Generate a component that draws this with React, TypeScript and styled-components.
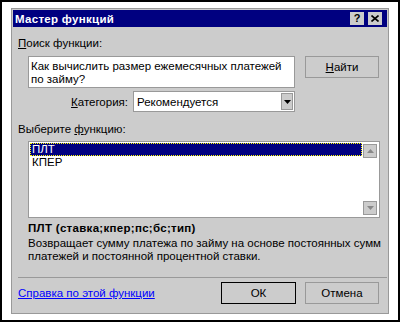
import React from "react";
import styled, { createGlobalStyle } from "styled-components";

const GlobalStyle = createGlobalStyle`
  html, body {
    margin: 0;
    padding: 0;
    background: #fff;
  }
  body {
    font-family: "Liberation Sans", Arial, sans-serif;
  }
`;

const Frame = styled.div`
  width: 400px;
  height: 322px;
  box-sizing: border-box;
  border: 2px solid #000;
  padding: 6px 0 0 9px;
  background: #fff;
`;

const Dialog = styled.div`
  width: 378px;
  height: 306px;
  box-sizing: border-box;
  border: 1px solid #999;
  padding: 1px;
  background: #ccc;
  display: flex;
  flex-direction: column;
  font-size: 11.5px;
  color: #000;
`;

const TitleBar = styled.div`
  height: 17px;
  flex: none;
  background: #000080;
  display: flex;
  align-items: center;
  justify-content: space-between;
  padding: 0 5px 0 2px;
`;

const Title = styled.span`
  color: #fff;
  font-weight: bold;
  font-size: 11.5px;
  letter-spacing: 0.3px;
`;

const TitleButtons = styled.div`
  display: flex;
  gap: 4px;
`;

const TitleButton = styled.div`
  width: 14px;
  height: 13px;
  background: #ccc;
  display: flex;
  align-items: center;
  justify-content: center;
  font-weight: bold;
  font-size: 11px;
  line-height: 13px;
`;

const Body = styled.div`
  padding: 9px 8px 0 5px;
  display: flex;
  flex-direction: column;
`;

const SectionLabel = styled.div<{ $top?: number }>`
  line-height: 14px;
  margin-top: ${(p) => p.$top ?? 0}px;
`;

const SearchRow = styled.div`
  display: flex;
  gap: 10px;
  margin: 6px 0 0 10px;
`;

const QueryBox = styled.div`
  width: 267px;
  height: 32px;
  box-sizing: border-box;
  border: 1px solid #999;
  background: #fff;
  padding: 3px 2px;
  line-height: 13px;
`;

const Button = styled.div<{ $width: number; $default?: boolean }>`
  width: ${(p) => p.$width}px;
  height: 22px;
  box-sizing: border-box;
  border: 1px solid ${(p) => (p.$default ? "#000" : "#999")};
  display: flex;
  align-items: center;
  justify-content: center;
  background: #ccc;
`;

const CategoryRow = styled.div`
  width: 267px;
  display: flex;
  justify-content: flex-end;
  align-items: center;
  gap: 5px;
  margin: 3px 0 0 10px;
`;

const Select = styled.div`
  width: 162px;
  height: 21px;
  box-sizing: border-box;
  border: 1px solid #999;
  background: #fff;
  display: flex;
  align-items: center;
`;

const SelectText = styled.span`
  flex: 1;
  padding-left: 3px;
`;

const DropButton = styled.div`
  width: 12px;
  height: 17px;
  margin-right: 1px;
  box-sizing: border-box;
  border: 1px solid #999;
  background: #ccc;
  display: flex;
  align-items: center;
  justify-content: center;
`;

const ListBox = styled.div`
  width: 352px;
  height: 77px;
  box-sizing: border-box;
  border: 1px solid #999;
  background: #fff;
  display: flex;
  margin: 5px 0 0 10px;
`;

const Items = styled.div`
  flex: 1;
  padding: 1px 0 0 1px;
`;

const Item = styled.div<{ $selected?: boolean }>`
  height: 13px;
  box-sizing: border-box;
  line-height: 11px;
  padding-left: 1px;
  border: 1px ${(p) => (p.$selected ? "dotted #ffff00" : "solid transparent")};
  background: ${(p) => (p.$selected ? "#000080" : "transparent")};
  color: ${(p) => (p.$selected ? "#fff" : "#000")};
`;

const ScrollBar = styled.div`
  width: 17px;
  box-sizing: border-box;
  padding: 2px 2px 2px 1px;
  display: flex;
  flex-direction: column;
  justify-content: space-between;
`;

const ScrollButton = styled.div`
  width: 14px;
  height: 14px;
  box-sizing: border-box;
  border: 1px solid #999;
  background: #ccc;
  display: flex;
  align-items: center;
  justify-content: center;
`;

const Signature = styled.div`
  font-weight: bold;
  line-height: 14px;
  letter-spacing: 0.3px;
  margin: 3px 0 0 10px;
`;

const Description = styled.div`
  line-height: 13px;
  white-space: nowrap;
  margin: 2px 0 0 10px;
`;

const Separator = styled.div`
  height: 1px;
  background: #999;
  margin: 14px -8px 0 0;
`;

const BottomRow = styled.div`
  display: flex;
  align-items: center;
  gap: 9px;
  margin-top: 4px;
`;

const HelpLink = styled.a`
  flex: 1;
  color: #0000ff;
  text-decoration: underline;
`;

const Triangle = ({ up, color }: { up?: boolean; color: string }) => (
  <svg width="7" height="4" viewBox="0 0 7 4">
    <polygon points={up ? "3.5,0 7,4 0,4" : "0,0 7,0 3.5,4"} fill={color} />
  </svg>
);

export default function App() {
  return (
    <>
      <GlobalStyle />
      <Frame>
        <Dialog>
          <TitleBar>
            <Title>Мастер функций</Title>
            <TitleButtons>
              <TitleButton>?</TitleButton>
              <TitleButton>
                <svg width="8" height="7" viewBox="0 0 8 7">
                  <path d="M0.5 0.5 L7.5 6.5 M7.5 0.5 L0.5 6.5" stroke="#000" strokeWidth="1.6" />
                </svg>
              </TitleButton>
            </TitleButtons>
          </TitleBar>
          <Body>
            <SectionLabel>
              <u>П</u>оиск функции:
            </SectionLabel>
            <SearchRow>
              <QueryBox>Как вычислить размер ежемесячных платежей по займу?</QueryBox>
              <Button $width={74}>
                <span>
                  <u>Н</u>айти
                </span>
              </Button>
            </SearchRow>
            <CategoryRow>
              <span>
                <u>К</u>атегория:
              </span>
              <Select>
                <SelectText>Рекомендуется</SelectText>
                <DropButton>
                  <Triangle color="#000" />
                </DropButton>
              </Select>
            </CategoryRow>
            <SectionLabel $top={10}>
              Выберите <u>ф</u>ункцию:
            </SectionLabel>
            <ListBox>
              <Items>
                <Item $selected>ПЛТ</Item>
                <Item>КПЕР</Item>
              </Items>
              <ScrollBar>
                <ScrollButton>
                  <Triangle up color="#888" />
                </ScrollButton>
                <ScrollButton>
                  <Triangle color="#888" />
                </ScrollButton>
              </ScrollBar>
            </ListBox>
            <Signature>ПЛТ (ставка;кпер;пс;бс;тип)</Signature>
            <Description>
              Возвращает сумму платежа по займу на основе постоянных сумм
              <br />
              платежей и постоянной процентной ставки.
            </Description>
            <Separator />
            <BottomRow>
              <HelpLink href="#">Справка по этой функции</HelpLink>
              <Button $width={75} $default>
                ОК
              </Button>
              <Button $width={74}>Отмена</Button>
            </BottomRow>
          </Body>
        </Dialog>
      </Frame>
    </>
  );
}
